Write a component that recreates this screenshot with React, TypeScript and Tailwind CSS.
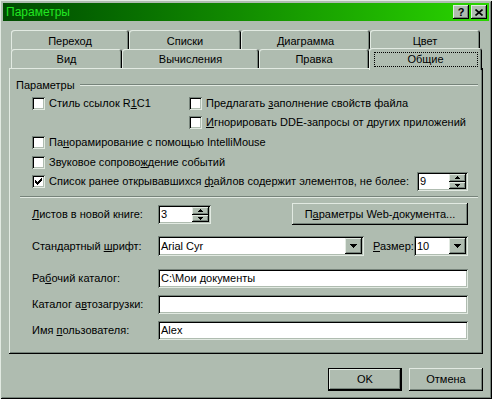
import React from "react";

const raised = "shadow-[inset_-1px_-1px_#000,inset_1px_1px_#e2eae2,inset_-2px_-2px_#76837a]";
const sunken = "shadow-[inset_1px_1px_#76837a,inset_-1px_-1px_#e2eae2,inset_2px_2px_#000,inset_-2px_-2px_#afbcb0]";
const smallBtn = "shadow-[inset_-1px_-1px_#000,inset_1px_1px_#e2eae2,inset_-2px_-2px_#76837a,inset_2px_2px_#afbcb0]";

function Check({ checked }: { checked?: boolean }) {
  return (
    <span className={`w-[13px] h-[13px] bg-white shrink-0 flex items-center justify-center ${sunken}`}>
      {checked && (
        <svg width="7" height="7" viewBox="0 0 7 7" shapeRendering="crispEdges">
          <rect x="0" y="2" width="1" height="3" fill="#000" />
          <rect x="1" y="3" width="1" height="3" fill="#000" />
          <rect x="2" y="4" width="1" height="3" fill="#000" />
          <rect x="3" y="3" width="1" height="3" fill="#000" />
          <rect x="4" y="2" width="1" height="3" fill="#000" />
          <rect x="5" y="1" width="1" height="3" fill="#000" />
          <rect x="6" y="0" width="1" height="3" fill="#000" />
        </svg>
      )}
    </span>
  );
}

function Arrow({ up, size = 5 }: { up?: boolean; size?: number }) {
  const h = Math.ceil(size / 2);
  return (
    <svg width={size} height={h} viewBox={`0 0 ${size} ${h}`} shapeRendering="crispEdges">
      <polygon points={up ? `${size / 2},0 ${size},${h} 0,${h}` : `0,0 ${size},0 ${size / 2},${h}`} fill="#000" />
    </svg>
  );
}

function Spin({ value, className }: { value: string; className: string }) {
  return (
    <div className={`flex h-[19px] bg-white p-[2px] ${sunken} ${className}`}>
      <span className="flex-1 pl-[1px] leading-[15px]">{value}</span>
      <div className="flex flex-col w-[17px]">
        <span className={`h-[8px] flex items-center justify-center bg-[#afbcb0] ${smallBtn}`}>
          <Arrow up />
        </span>
        <span className={`h-[7px] flex items-center justify-center bg-[#afbcb0] ${smallBtn}`}>
          <Arrow />
        </span>
      </div>
    </div>
  );
}

function Combo({ value, className }: { value: string; className: string }) {
  return (
    <div className={`flex h-[20px] bg-white p-[2px] ${sunken} ${className}`}>
      <span className="flex-1 pl-[1px] leading-[16px]">{value}</span>
      <span className={`w-[17px] flex items-center justify-center bg-[#afbcb0] ${smallBtn}`}>
        <Arrow size={7} />
      </span>
    </div>
  );
}

function Field({ value }: { value?: string }) {
  return (
    <div className={`w-[310px] h-[19px] bg-white px-[3px] leading-[19px] ${sunken}`}>{value}</div>
  );
}

function Tab({ label, className, selected }: { label: string; className: string; selected?: boolean }) {
  return (
    <div
      className={`flex items-center justify-center bg-[#afbcb0] rounded-t-[3px] shadow-[inset_1px_1px_#e2eae2,inset_-1px_0_#000,inset_-2px_0_#76837a] ${className}`}
    >
      {selected ? (
        <span className="border border-dotted border-black w-[104px] h-[15px] flex items-center justify-center">
          {label}
        </span>
      ) : (
        <span className="pt-[2px]">{label}</span>
      )}
    </div>
  );
}

export default function App() {
  return (
    <div
      className={`w-[492px] h-[399px] bg-[#afbcb0] p-[3px] flex flex-col text-[11px] text-black font-['Liberation_Sans',Arial,sans-serif] shadow-[inset_1px_1px_#e2eae2,inset_-1px_-1px_#000,inset_2px_2px_#afbcb0,inset_-2px_-2px_#76837a]`}
    >
      {/* title bar */}
      <div className="h-[18px] flex items-center pl-[3px] pr-[2px] bg-gradient-to-r from-[#004c00] to-[#2ad600]">
        <span className="text-[12px] text-[#22e622]">Параметры</span>
        <div className="ml-auto flex gap-[2px]">
          <span className={`w-[16px] h-[14px] bg-[#afbcb0] flex items-center justify-center font-bold text-[11px] leading-none ${raised}`}>
            ?
          </span>
          <span className={`w-[16px] h-[14px] bg-[#afbcb0] flex items-center justify-center ${raised}`}>
            <svg width="8" height="7" viewBox="0 0 8 7">
              <path d="M0.5 0.5 L7.5 6.5 M7.5 0.5 L0.5 6.5" stroke="#000" strokeWidth="1.6" />
            </svg>
          </span>
        </div>
      </div>

      {/* tabs */}
      <div className="mt-[9px] ml-[8px] flex h-[19px]">
        <Tab label="Переход" className="w-[118px] h-[20px]" />
        <Tab label="Списки" className="w-[112px] h-[20px]" />
        <Tab label="Диаграмма" className="w-[129px] h-[20px]" />
        <Tab label="Цвет" className="w-[110px] h-[20px]" />
      </div>
      <div className="ml-[8px] flex items-end h-[19px] relative z-10">
        <Tab label="Вид" className="w-[111px] h-[19px]" />
        <Tab label="Вычисления" className="w-[137px] h-[19px]" />
        <Tab label="Правка" className="w-[110px] h-[19px]" />
        <Tab label="Общие" selected className="w-[113px] h-[22px] -mb-[2px]" />
      </div>

      {/* panel */}
      <div className={`mx-[6px] h-[286px] flex flex-col ${raised}`}>
        <div className="mt-[10px] ml-[7px] mr-[5px] h-[14px] flex items-center">
          <span>Параметры</span>
          <div className="flex-1 ml-[5px] h-[2px] border-t border-t-[#76837a] border-b border-b-[#e2eae2]" />
        </div>

        <div className="mt-[4px] ml-[23px] h-[14px] flex items-center">
          <div className="w-[157px] flex items-center gap-[4px]">
            <Check />
            <span>
              Стиль ссылок R<u>1</u>C1
            </span>
          </div>
          <div className="flex items-center gap-[4px]">
            <Check />
            <span>
              Предлагать <u>з</u>аполнение свойств файла
            </span>
          </div>
        </div>
        <div className="mt-[5px] ml-[180px] h-[14px] flex items-center gap-[4px]">
          <Check />
          <span>
            <u>И</u>гнорировать DDE-запросы от других приложений
          </span>
        </div>
        <div className="mt-[6px] ml-[23px] h-[14px] flex items-center gap-[4px]">
          <Check />
          <span>
            Па<u>н</u>орамирование с помощью IntelliMouse
          </span>
        </div>
        <div className="mt-[6px] ml-[23px] h-[14px] flex items-center gap-[4px]">
          <Check />
          <span>
            Звуковое сопрово<u>ж</u>дение событий
          </span>
        </div>
        <div className="mt-[2px] ml-[23px] mr-[15px] h-[20px] flex items-center gap-[4px]">
          <Check checked />
          <span>
            Список ранее открывавшихся <u>ф</u>айлов содержит элементов, не более:
          </span>
          <Spin value="9" className="ml-auto w-[51px]" />
        </div>

        <div className="mt-[5px] ml-[11px] mr-[5px] h-[2px] border-t border-t-[#76837a] border-b border-b-[#e2eae2]" />

        <div className="mt-[5px] ml-[23px] mr-[15px] h-[22px] flex items-center">
          <span className="w-[126px]">
            <u>Л</u>истов в новой книге:
          </span>
          <Spin value="3" className="w-[53px]" />
          <button className={`ml-auto w-[176px] h-[22px] bg-[#afbcb0] ${raised}`}>
            П<u>а</u>раметры Web-документа...
          </button>
        </div>

        <div className="mt-[11px] ml-[23px] mr-[15px] h-[20px] flex items-center">
          <span className="w-[126px]">
            Стандартный <u>ш</u>рифт:
          </span>
          <Combo value="Arial Cyr" className="w-[206px]" />
          <span className="ml-[9px]">
            <u>Р</u>азмер:
          </span>
          <Combo value="10" className="ml-auto w-[54px]" />
        </div>

        <div className="mt-[13px] ml-[23px] mr-[15px] h-[19px] flex items-center">
          <span className="w-[126px]">
            Ра<u>б</u>очий каталог:
          </span>
          <Field value="C:\Мои документы" />
        </div>
        <div className="mt-[7px] ml-[23px] mr-[15px] h-[19px] flex items-center">
          <span className="w-[126px]">
            Каталог а<u>в</u>тозагрузки:
          </span>
          <Field />
        </div>
        <div className="mt-[7px] ml-[23px] mr-[15px] h-[19px] flex items-center">
          <span className="w-[126px]">
            Имя <u>п</u>ользователя:
          </span>
          <Field value="Alex" />
        </div>
      </div>

      {/* buttons */}
      <div className="mt-[14px] mr-[6px] flex justify-end gap-[7px]">
        <button className="w-[74px] h-[23px] bg-[#afbcb0] border border-black shadow-[inset_-1px_-1px_#000,inset_1px_1px_#e2eae2,inset_-2px_-2px_#76837a]">
          OK
        </button>
        <button className={`w-[74px] h-[23px] bg-[#afbcb0] ${raised}`}>Отмена</button>
      </div>
    </div>
  );
}
